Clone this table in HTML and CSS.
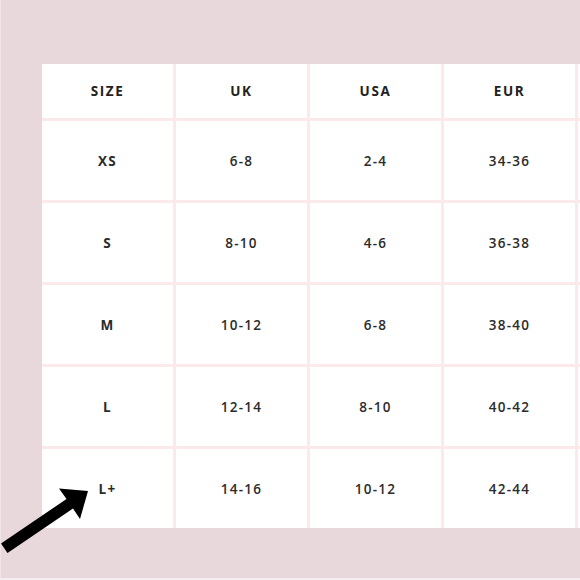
FILE: index.html
```html
<!DOCTYPE html>
<html>
<head>
<meta charset="utf-8">
<link rel="stylesheet" href="styles.css">
</head>
<body>
<div class="page">
  <div class="chart">
    <div class="cell head">SIZE</div>
    <div class="cell head">UK</div>
    <div class="cell head">USA</div>
    <div class="cell head">EUR</div>
    <div class="cell head"></div>

    <div class="cell size">XS</div>
    <div class="cell">6-8</div>
    <div class="cell">2-4</div>
    <div class="cell">34-36</div>
    <div class="cell"></div>

    <div class="cell size">S</div>
    <div class="cell">8-10</div>
    <div class="cell">4-6</div>
    <div class="cell">36-38</div>
    <div class="cell"></div>

    <div class="cell size">M</div>
    <div class="cell">10-12</div>
    <div class="cell">6-8</div>
    <div class="cell">38-40</div>
    <div class="cell"></div>

    <div class="cell size">L</div>
    <div class="cell">12-14</div>
    <div class="cell">8-10</div>
    <div class="cell">40-42</div>
    <div class="cell"></div>

    <div class="cell size">L+</div>
    <div class="cell">14-16</div>
    <div class="cell">10-12</div>
    <div class="cell">42-44</div>
    <div class="cell"></div>
  </div>
  <svg class="arrow" width="100" height="90" viewBox="0 480 100 90">
    <polygon points="87,491 79,519 72,508.5 6.5,553 0,543.5 65.5,499 58,488.5" fill="#000"/>
  </svg>
</div>
</body>
</html>
```
FILE: styles.css
```css
html, body {
  margin: 0;
  padding: 0;
}
body {
  background: #e9d8db;
  font-family: "Open Sans", "Lato", sans-serif;
}
.page {
  position: relative;
  width: 580px;
  height: 580px;
  overflow: hidden;
  box-sizing: border-box;
  padding: 64px 0 0 41px;
  border-bottom: 2px solid #f4ecee;
  border-left: 1px solid #f1e5e7;
}
.chart {
  display: grid;
  grid-template-columns: repeat(5, 131px);
  grid-template-rows: 54px repeat(5, 79px);
  gap: 3px;
  background: #fce9ea;
  width: max-content;
}
.cell {
  background: #fff;
  display: flex;
  align-items: center;
  justify-content: center;
  font-size: 13.5px;
  font-weight: 600;
  letter-spacing: 1.3px;
  color: #2b2b2b;
}
.head {
  font-weight: 700;
  font-size: 13.5px;
  letter-spacing: 1.6px;
  color: #222;
}
.size {
  font-weight: 700;
}
.arrow {
  position: absolute;
  left: 0;
  top: 480px;
}
```
